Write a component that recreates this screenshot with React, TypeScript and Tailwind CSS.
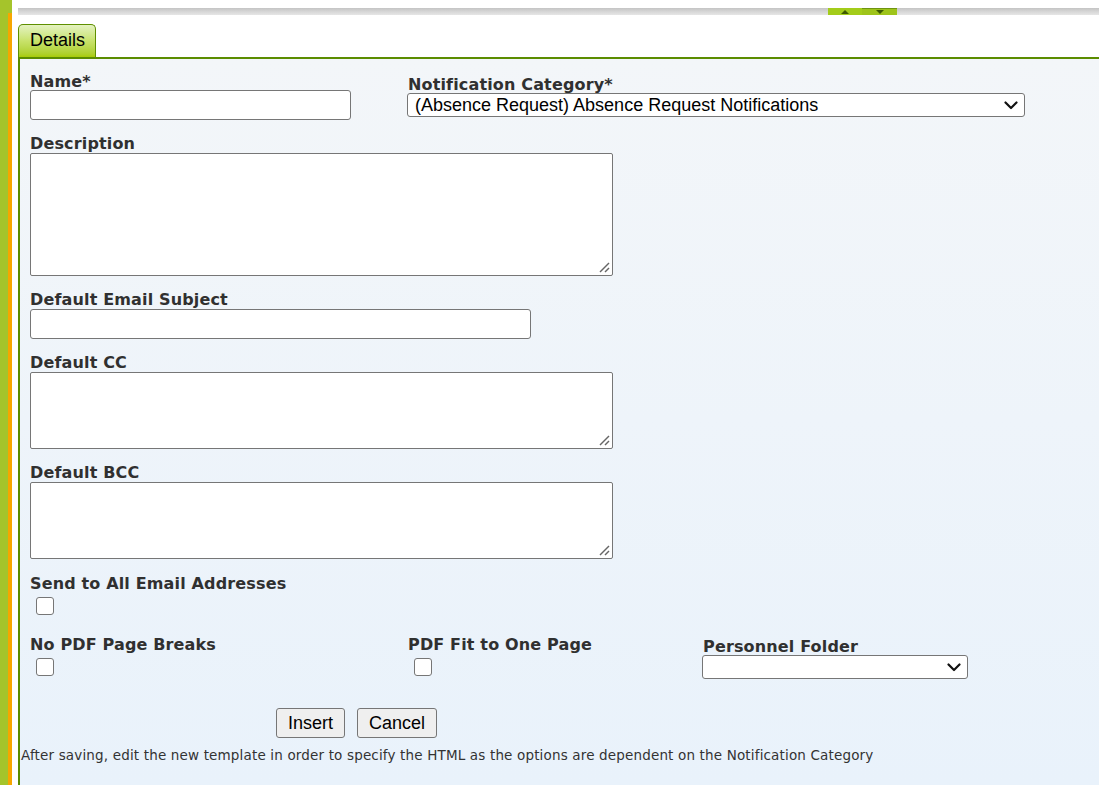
import React from "react";

const labelCls =
  "block pt-[1px] -mb-[1px] font-['DejaVu_Sans',sans-serif] font-bold text-[16px] tracking-[0.15px] leading-[18px] text-[#303030] whitespace-nowrap";

function Chevron() {
  return (
    <svg width="14" height="9" viewBox="0 0 14 9" className="shrink-0">
      <polyline points="1.5,1.5 7,7 12.5,1.5" fill="none" stroke="#111" strokeWidth="2.2" strokeLinecap="round" strokeLinejoin="round" />
    </svg>
  );
}

function Select({ width, text }: { width: string; text?: string }) {
  return (
    <div
      className={`${width} h-[24px] bg-white border border-[#767676] rounded-[3px] flex items-center justify-between pl-[7px] pr-[6px] font-['Liberation_Sans',Arial,sans-serif] text-[18px] text-black leading-none`}
    >
      <span className="whitespace-nowrap">{text ?? ""}</span>
      <Chevron />
    </div>
  );
}

function TextArea({ height }: { height: string }) {
  return (
    <div className="relative w-[583px]">
      <textarea
        className={`block w-[583px] ${height} resize-none bg-white border border-[#767676] rounded-[2px] outline-none`}
      />
      <svg width="11" height="11" viewBox="0 0 11 11" className="absolute right-[3px] bottom-[3px]">
        <line x1="1" y1="10" x2="10" y2="1" stroke="#666" strokeWidth="1.4" />
        <line x1="6" y1="10" x2="10" y2="6" stroke="#666" strokeWidth="1.4" />
      </svg>
    </div>
  );
}

function Checkbox() {
  return (
    <input
      type="checkbox"
      className="appearance-none block w-[18px] h-[18px] bg-white border border-[#767676] rounded-[3px] ml-[6px]"
    />
  );
}

export default function App() {
  return (
    <div className="flex w-full min-h-[785px] bg-white">
      {/* left strips */}
      <div className="w-[8px] bg-[#a5c42b]" />
      <div className="w-[4px] flex flex-col">
        <div className="h-[13px] bg-[#a5c42b]" />
        <div className="flex-1 bg-[#f7a600]" />
      </div>
      <div className="w-[6px] bg-white" />

      {/* main */}
      <div className="flex-1 flex flex-col">
        <div className="h-[8px] bg-white" />
        <div className="h-[7px] flex">
          <div className="w-[810px] bg-gradient-to-b from-[#c4c4c4] via-[#d6d6d6] to-[#e6e6e6]" />
          <div className="w-[34px] bg-[#a3cc1a] flex items-center justify-center">
            <svg width="8" height="4" viewBox="0 0 8 4">
              <polygon points="0,4 8,4 4,0" fill="#3d5a00" />
            </svg>
          </div>
          <div className="w-[35px] bg-[#9ec41a] border-t border-[#6f9410] flex items-center justify-center">
            <svg width="8" height="4" viewBox="0 0 8 4">
              <polygon points="0,0 8,0 4,4" fill="#3d5a00" />
            </svg>
          </div>
          <div className="flex-1 bg-gradient-to-b from-[#c4c4c4] via-[#d6d6d6] to-[#e6e6e6]" />
        </div>
        <div className="h-[9px] bg-white" />

        {/* tab row */}
        <div className="h-[33px] flex items-end">
          <div className="w-[78px] h-[33px] border border-b-0 border-[#5f8f00] rounded-t-[5px] bg-gradient-to-b from-[#e4f2c0] via-[#c8e26a] to-[#a8cc00] flex items-center pl-[11px] pb-[3px]">
            <span className="font-['Liberation_Sans',Arial,sans-serif] text-[18px] text-black leading-none">
              Details
            </span>
          </div>
        </div>
        <div className="h-[2px] bg-[#5b8c00]" />

        {/* panel */}
        <div className="flex-1 border-l-2 border-[#5b8c00] bg-gradient-to-b from-[#f3f6f9] to-[#e9f2fb] pl-[1px]">
          <div className="pl-[9px] pt-[13px]">
            {/* row 1 */}
            <div className="flex items-start">
              <div className="w-[378px]">
                <span className={labelCls}>Name*</span>
                <input
                  type="text"
                  className="block w-[321px] h-[30px] bg-white border border-[#767676] rounded-[3px] outline-none"
                />
              </div>
              <div className="mt-[3px] -ml-[1px]">
                <span className={`${labelCls} ml-[1px]`}>Notification Category*</span>
                <Select width="w-[618px]" text="(Absence Request) Absence Request Notifications" />
              </div>
            </div>

            {/* description */}
            <div className="mt-[14px]">
              <span className={labelCls}>Description</span>
              <div className="mt-[1px]">
                <TextArea height="h-[123px]" />
              </div>
            </div>

            {/* subject */}
            <div className="mt-[14px]">
              <span className={labelCls}>Default Email Subject</span>
              <input
                type="text"
                className="mt-[1px] block w-[501px] h-[30px] bg-white border border-[#767676] rounded-[3px] outline-none"
              />
            </div>

            {/* cc */}
            <div className="mt-[14px]">
              <span className={labelCls}>Default CC</span>
              <div className="mt-[1px]">
                <TextArea height="h-[77px]" />
              </div>
            </div>

            {/* bcc */}
            <div className="mt-[14px]">
              <span className={labelCls}>Default BCC</span>
              <div className="mt-[1px]">
                <TextArea height="h-[77px]" />
              </div>
            </div>

            {/* send all */}
            <div className="mt-[15px]">
              <span className={labelCls}>Send to All Email Addresses</span>
              <div className="mt-[5px]">
                <Checkbox />
              </div>
            </div>

            {/* row 7 */}
            <div className="mt-[20px] flex items-start">
              <div className="w-[378px]">
                <span className={labelCls}>No PDF Page Breaks</span>
                <div className="mt-[5px]">
                  <Checkbox />
                </div>
              </div>
              <div className="w-[295px]">
                <span className={labelCls}>PDF Fit to One Page</span>
                <div className="mt-[5px]">
                  <Checkbox />
                </div>
              </div>
              <div className="mt-[2px] -ml-[1px]">
                <span className={`${labelCls} ml-[1px]`}>Personnel Folder</span>
                <Select width="w-[266px]" />
              </div>
            </div>

            {/* buttons */}
            <div className="mt-[29px] flex gap-[12px] ml-[246px]">
              <button className="h-[30px] w-[69px] bg-[#efefef] border border-[#767676] rounded-[3px] font-['Liberation_Sans',Arial,sans-serif] text-[18px] text-black leading-none">
                Insert
              </button>
              <button className="h-[30px] w-[80px] bg-[#efefef] border border-[#767676] rounded-[3px] font-['Liberation_Sans',Arial,sans-serif] text-[18px] text-black leading-none">
                Cancel
              </button>
            </div>
          </div>

          <p className="mt-[9px] font-['DejaVu_Sans',sans-serif] text-[13.5px] tracking-[0.16px] leading-[16px] text-[#333333] whitespace-nowrap">
            After saving, edit the new template in order to specify the HTML as the options are dependent on the Notification Category
          </p>
        </div>
      </div>
    </div>
  );
}
